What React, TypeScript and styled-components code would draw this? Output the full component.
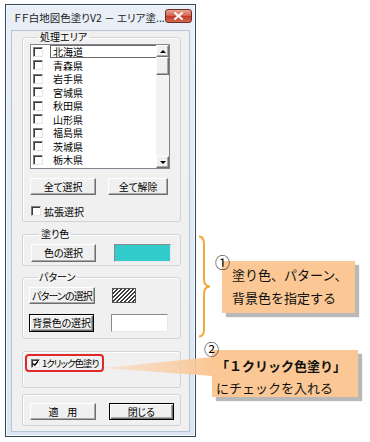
import React from 'react';
import styled, { createGlobalStyle, css } from 'styled-components';

const GlobalStyle = createGlobalStyle`
    html, body {
        margin: 0;
        padding: 0;
        background: #ffffff;
    }
    body {
        font-family: "Noto Sans CJK JP", "Noto Sans", sans-serif;
    }
`;

const PREFS = ['北海道', '青森県', '岩手県', '宮城県', '秋田県', '山形県', '福島県', '茨城県', '栃木県'];

const UI_FONT = `"Noto Sans CJK JP", "Noto Sans", sans-serif`;

const App = () => {
    return <Canvas>
        <GlobalStyle />
        <Dialog>
            <TitleBar>
                <Title>ＦＦ白地図色塗りV2 － エリア塗...</Title>
                <CloseBtn>
                    <svg width="9" height="8" viewBox="0 0 9 8">
                        <path d="M1 1 L8 7 M8 1 L1 7" stroke="#fff" strokeWidth="2" strokeLinecap="square" />
                    </svg>
                </CloseBtn>
            </TitleBar>
            <Client>
                <Group $mt={0} $pad="1px 6px 4px 7px">
                    <Legend>処理エリア</Legend>
                    <ListBox>
                        <Items>
                            {PREFS.map((name, i) => <Item key={name}>
                                <Check $size={10} />
                                <ItemLabel $focus={i === 0}>{name}</ItemLabel>
                            </Item>)}
                        </Items>
                        <ScrollBar>
                            <ScrollBtn><Arrow $up /></ScrollBtn>
                            <Thumb />
                            <Track />
                            <ScrollBtn><Arrow /></ScrollBtn>
                        </ScrollBar>
                    </ListBox>
                    <BtnRow $mt={9} $gap={12}>
                        <Btn $w={66}>全て選択</Btn>
                        <Btn $w={60}>全て解除</Btn>
                    </BtnRow>
                    <CheckRow $mt={10}>
                        <Check $size={10} />
                        <span>拡張選択</span>
                    </CheckRow>
                </Group>

                <Group $mt={6} $pad="4px 6px 3px 8px">
                    <Legend>塗り色</Legend>
                    <BtnRow $mt={0} $gap={18}>
                        <Btn $w={65} $h={18}>色の選択</Btn>
                        <Swatch $w={57} $h={18} $bg="#33cccc" />
                    </BtnRow>
                </Group>

                <Group $mt={5} $pad="4px 6px 6px 6px">
                    <Legend>パターン</Legend>
                    <BtnRow $mt={0} $gap={17}>
                        <Btn $w={66} $tight>パターンの選択</Btn>
                        <Hatch />
                    </BtnRow>
                    <BtnRow $mt={10} $gap={17}>
                        <Btn $w={65} $h={18} $default>背景色の選択</Btn>
                        <Swatch $w={57} $h={18} $bg="#ffffff" />
                    </BtnRow>
                </Group>

                <Plain $mt={12} $pad="2px 6px 15px 2px">
                    <Highlight>
                        <Check $size={9}>
                            <svg width="7" height="7" viewBox="0 0 7 7">
                                <path d="M1 3.5 L2.8 5.3 L6 1.2" stroke="#000" strokeWidth="1.4" fill="none" />
                            </svg>
                        </Check>
                        <HighlightText>1クリック色塗り</HighlightText>
                    </Highlight>
                </Plain>

                <Plain $mt={6} $pad="8px 6px 5px 7px">
                    <BtnRow $mt={0} $gap={13}>
                        <Btn $w={66}>適<Space />用</Btn>
                        <Btn $w={66} $default>閉じる</Btn>
                    </BtnRow>
                </Plain>
            </Client>
        </Dialog>

        <Notes>
            <NoteRow>
                <svg width="14" height="103" viewBox="0 0 14 103">
                    <path d="M1 1.5 Q6 1.5 6 9 L6 44 Q6 51.5 12 51.5 Q6 51.5 6 59 L6 94 Q6 101.5 1 101.5"
                        stroke="#f2a93b" strokeWidth="2" fill="none" />
                </svg>
                <Note $w={133} $h={52} $ml={10} $pad="2px 0 0 10px" $lh={23}>
                    <Num>①</Num>
                    塗り色、パターン、<br />背景色を指定する
                </Note>
            </NoteRow>
            <Note $w={146} $h={47} $ml={14} $mt={12} $pad="5px 0 0 4px" $lh={22}>
                <Num $left={-8} $top={-9}>②</Num>
                <b>「１クリック色塗り」</b><br />にチェックを入れる
            </Note>
        </Notes>

        <Pointer width="116" height="28" viewBox="0 0 116 28">
            <defs>
                <linearGradient id="wedge" x1="0" y1="0" x2="1" y2="0">
                    <stop offset="0" stopColor="#fbd3ad" stopOpacity="0.5" />
                    <stop offset="1" stopColor="#fac795" />
                </linearGradient>
            </defs>
            <polygon points="4,16 112,5 112,24" fill="url(#wedge)" />
        </Pointer>
    </Canvas>
}

export default App;

const Canvas = styled.div`
    position: relative;
    width: 370px;
    height: 442px;
    box-sizing: border-box;
    padding: 4px 0 0 5px;
    display: flex;
    align-items: flex-start;
    overflow: hidden;
    background: #ffffff;
`

const Dialog = styled.div`
    width: 191px;
    height: 433px;
    box-sizing: border-box;
    border: 1px solid #34495a;
    background: linear-gradient(#e8eff7, #dbe6f2);
    box-shadow: inset 0 0 0 1px #f5f9fd;
    display: flex;
    flex-direction: column;
    font-family: ${UI_FONT};
    font-feature-settings: "palt";
`

const TitleBar = styled.div`
    height: 25px;
    display: flex;
    align-items: center;
    padding: 0 3px 0 8px;
`

const Title = styled.div`
    flex: 1;
    font-size: 10.5px;
    color: #1e1e1e;
    white-space: nowrap;
    overflow: hidden;
`

const CloseBtn = styled.div`
    align-self: flex-start;
    margin-top: 4px;
    width: 27px;
    height: 14px;
    box-sizing: border-box;
    border: 1px solid #6b2f28;
    border-radius: 3px;
    background: linear-gradient(#e9a592, #d0604d 50%, #c13a26 51%, #d46a4f);
    display: flex;
    align-items: center;
    justify-content: center;
`

const Client = styled.div`
    margin: 0 5px;
    height: 402px;
    box-sizing: border-box;
    border: 1px solid #b7c6d6;
    background: #f0f0f0;
    padding: 0 8px 0 10px;
    display: flex;
    flex-direction: column;
    font-size: 10px;
    color: #000;
`

const Group = styled.fieldset<{ $mt: number, $pad: string }>`
    margin: ${p => p.$mt}px 0 0;
    padding: ${p => p.$pad};
    min-width: 0;
    border: 1px solid #cdd4da;
    border-radius: 3px;
    box-shadow: inset 1px 1px 0 #ffffff;
`

const Plain = styled.div<{ $mt: number, $pad: string }>`
    margin-top: ${p => p.$mt}px;
    padding: ${p => p.$pad};
    border: 1px solid #cdd4da;
    border-radius: 3px;
    box-shadow: inset 1px 1px 0 #ffffff;
`

const Legend = styled.legend`
    margin-left: 8px;
    padding: 0 2px;
    font-size: 10px;
    line-height: 12px;
`

const ListBox = styled.div`
    width: 140px;
    height: 125px;
    box-sizing: border-box;
    border: 1px solid #7f8690;
    background: #ffffff;
    display: flex;
`

const Items = styled.div`
    flex: 1;
    display: flex;
    flex-direction: column;
`

const Item = styled.div`
    height: 13.5px;
    display: flex;
    align-items: center;
    padding-left: 2px;
`

const ItemLabel = styled.span<{ $focus?: boolean }>`
    flex: 1;
    margin-left: 7px;
    padding-left: 2px;
    height: 13px;
    line-height: 12px;
    box-sizing: border-box;
    border: 1px solid ${p => p.$focus ? '#6a6a6a' : 'transparent'};
    border-right: none;
`

const Check = styled.span<{ $size: number }>`
    flex: none;
    width: ${p => p.$size}px;
    height: ${p => p.$size}px;
    box-sizing: border-box;
    background: #ffffff;
    border: 1px solid;
    border-color: #7a7a7a #e4e4e4 #e4e4e4 #7a7a7a;
    box-shadow: inset 1px 1px 0 #3a3a3a;
    display: inline-flex;
    align-items: center;
    justify-content: center;
`

const ScrollBar = styled.div`
    width: 13px;
    display: flex;
    flex-direction: column;
    background: #f3f3f3;
`

const raised = css`
    box-sizing: border-box;
    background: #f0f0f0;
    border: 1px solid;
    border-color: #ffffff #6e6e6e #6e6e6e #ffffff;
    box-shadow: inset -1px -1px 0 #a9a9a9;
`

const ScrollBtn = styled.div`
    ${raised}
    height: 12px;
    display: flex;
    align-items: center;
    justify-content: center;
`

const Arrow = styled.span<{ $up?: boolean }>`
    width: 0;
    height: 0;
    border-left: 3px solid transparent;
    border-right: 3px solid transparent;
    ${p => p.$up ? 'border-bottom: 3px solid #000;' : 'border-top: 3px solid #000;'}
`

const Thumb = styled.div`
    ${raised}
    height: 18px;
`

const Track = styled.div`
    flex: 1;
`

const BtnRow = styled.div<{ $mt: number, $gap: number }>`
    margin-top: ${p => p.$mt}px;
    display: flex;
    align-items: center;
    gap: ${p => p.$gap}px;
`

const Btn = styled.button<{ $w: number, $h?: number, $default?: boolean, $tight?: boolean }>`
    ${raised}
    width: ${p => p.$w}px;
    height: ${p => p.$h ?? 17}px;
    padding: 0;
    display: flex;
    align-items: center;
    justify-content: center;
    font-family: ${UI_FONT};
    font-feature-settings: "palt";
    font-size: 10px;
    line-height: 1;
    letter-spacing: ${p => p.$tight ? '-0.9px' : '-0.2px'};
    white-space: nowrap;
    color: #000;
    ${p => p.$default && css`
        border: 1px solid #000;
        box-shadow: inset 1px 1px 0 #ffffff, inset -1px -1px 0 #6e6e6e, inset -2px -2px 0 #a9a9a9;
    `}
`

const Space = styled.span`
    display: inline-block;
    width: 9px;
`

const Swatch = styled.div<{ $w: number, $h: number, $bg: string }>`
    width: ${p => p.$w}px;
    height: ${p => p.$h}px;
    box-sizing: border-box;
    background: ${p => p.$bg};
    border: 1px solid;
    border-color: #8a8a8a #e8e8e8 #e8e8e8 #8a8a8a;
`

const Hatch = styled.div`
    width: 24px;
    height: 15px;
    box-sizing: border-box;
    border: 1px solid #555;
    background: repeating-linear-gradient(135deg, #3a3a3a 0 1px, #ffffff 1px 2.8px);
`

const CheckRow = styled.div<{ $mt: number }>`
    margin-top: ${p => p.$mt}px;
    height: 12px;
    display: flex;
    align-items: center;
    gap: 3px;
    padding-left: 1px;
`

const Highlight = styled.div`
    width: 79px;
    height: 18px;
    box-sizing: border-box;
    border: 2px solid #e02828;
    border-radius: 4px;
    display: flex;
    align-items: center;
    gap: 2px;
    padding-left: 4px;
    white-space: nowrap;
`

const HighlightText = styled.span`
    font-size: 9.5px;
    letter-spacing: -1px;
`

const Notes = styled.div`
    display: flex;
    flex-direction: column;
    align-items: flex-start;
    padding-top: 231px;
    margin-left: 2px;
`

const NoteRow = styled.div`
    height: 103px;
    display: flex;
    align-items: center;
`

const Note = styled.div<{ $w: number, $h: number, $ml: number, $mt?: number, $pad: string, $lh: number }>`
    position: relative;
    width: ${p => p.$w}px;
    height: ${p => p.$h}px;
    box-sizing: border-box;
    margin-left: ${p => p.$ml}px;
    margin-top: ${p => p.$mt ?? 0}px;
    padding: ${p => p.$pad};
    background: #fac795;
    box-shadow: 4px 4px 1px rgba(0, 0, 0, 0.28);
    font-size: 13px;
    line-height: ${p => p.$lh}px;
    color: #111;
    white-space: nowrap;
    b {
        font-weight: 700;
    }
`

const Num = styled.span<{ $left?: number, $top?: number }>`
    position: absolute;
    left: ${p => p.$left ?? -7}px;
    top: ${p => p.$top ?? -7}px;
    font-size: 15px;
    line-height: 15px;
    color: #000;
`

const Pointer = styled.svg`
    position: absolute;
    left: 100px;
    top: 352px;
`
